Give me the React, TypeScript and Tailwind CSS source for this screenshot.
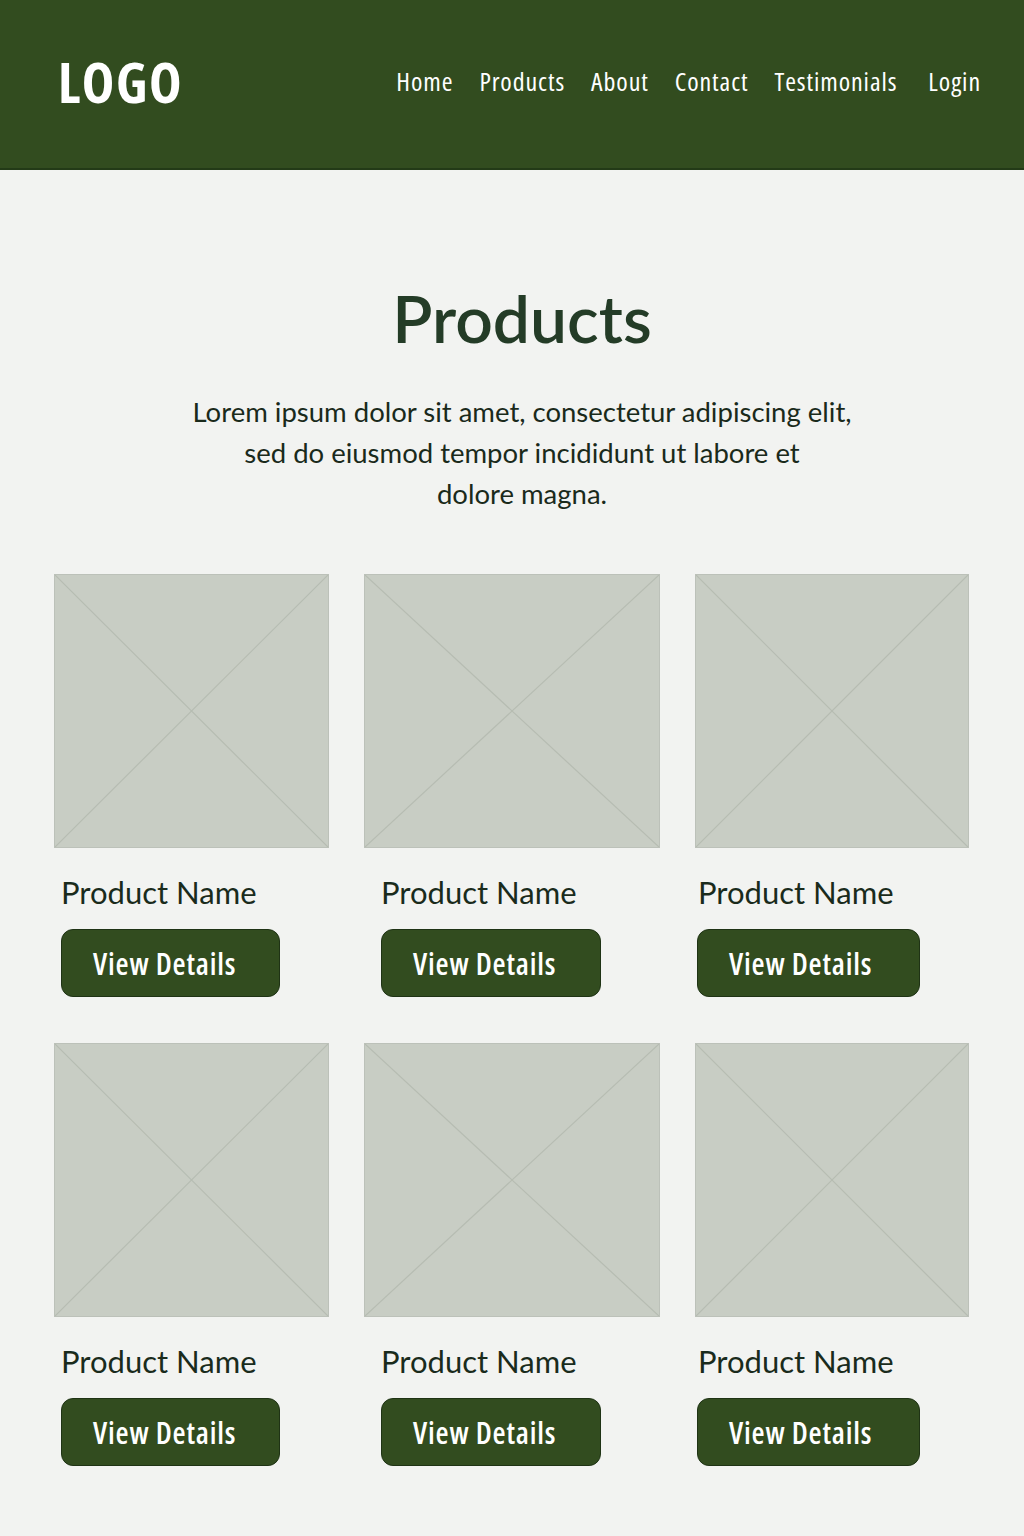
import React from "react";

const openCond = { fontFamily: '"Open Sans", sans-serif', fontStretch: "75%" } as React.CSSProperties;
const lato = { fontFamily: 'Lato, "Open Sans", sans-serif' } as React.CSSProperties;

function Placeholder() {
  return (
    <div className="relative h-[274px] w-full border border-[#bcc1b9] bg-[#c8cdc4]">
      <svg className="absolute inset-0 h-full w-full" viewBox="0 0 100 100" preserveAspectRatio="none">
        <line x1="0" y1="0" x2="100" y2="100" stroke="#b6bcb2" strokeWidth="1.2" vectorEffect="non-scaling-stroke" />
        <line x1="100" y1="0" x2="0" y2="100" stroke="#b6bcb2" strokeWidth="1.2" vectorEffect="non-scaling-stroke" />
      </svg>
    </div>
  );
}

type CardProps = { textPad: string; btnPad: string; btnWidth: string };

function Card({ textPad, btnPad, btnWidth }: CardProps) {
  return (
    <div className="flex flex-col">
      <Placeholder />
      <div className={`mt-[24px] text-[31px] leading-[40px] text-[#1a2b1c] ${textPad}`} style={lato}>
        Product Name
      </div>
      <button
        className={`mt-[17px] h-[68px] rounded-[12px] border border-[#1f3315] bg-[#324c1f] pl-[31px] text-left text-[30px] font-semibold tracking-[0.8px] text-white ${btnPad} ${btnWidth}`}
        style={openCond}
      >
        View Details
      </button>
    </div>
  );
}

const cols: CardProps[] = [
  { textPad: "pl-[7px]", btnPad: "ml-[7px]", btnWidth: "w-[219px]" },
  { textPad: "pl-[17px]", btnPad: "ml-[17px]", btnWidth: "w-[220px]" },
  { textPad: "pl-[3px]", btnPad: "ml-[2px]", btnWidth: "w-[223px]" },
];

export default function App() {
  return (
    <div className="min-h-[1536px] bg-[#f2f3f1]" style={lato}>
      <header className="flex h-[170px] items-center justify-between border-b-2 border-[#233a17] bg-[#324c1f] pl-[58px] pr-[43px]">
        <div className="mt-[-6px] text-[55px] font-bold leading-none tracking-[1.5px] text-white" style={openCond}>
          LOGO
        </div>
        <nav className="mt-[-6px] flex items-center gap-[26px] text-[26px] tracking-[0.9px] text-white" style={openCond}>
          <span>Home</span>
          <span>Products</span>
          <span>About</span>
          <span>Contact</span>
          <span>Testimonials</span>
          <span className="ml-[5px]">Login</span>
        </nav>
      </header>
      <main className="flex flex-col items-center pl-[20px] pt-[108px]">
        <h1 className="text-[66px] font-semibold leading-[80px] text-[#243c27]">Products</h1>
        <p className="mt-[33px] whitespace-nowrap text-center text-[27.5px] leading-[41px] text-[#1a2a1b]">
          Lorem ipsum dolor sit amet, consectetur adipiscing elit,
          <br />
          sed do eiusmod tempor incididunt ut labore et
          <br />
          dolore magna.
        </p>
      </main>
      <section className="ml-[54px] mt-[60px] grid grid-cols-[275px_296px_274px] gap-x-[35px] gap-y-[46px] pb-[60px]">
        {[0, 1].map((r) => cols.map((c, i) => <Card key={`${r}-${i}`} {...c} />))}
      </section>
    </div>
  );
}
